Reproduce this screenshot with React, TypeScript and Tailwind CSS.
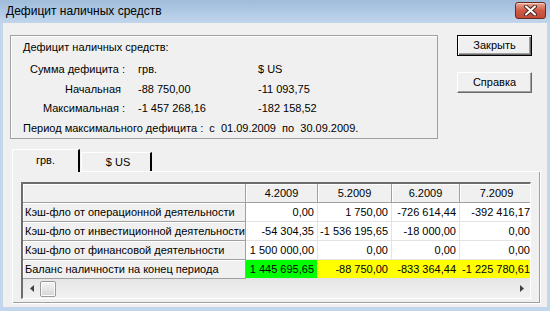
import React from 'react';

interface GridRow {
  label: string;
  values: string[];
  colors?: string[];
}

const months = ['4.2009', '5.2009', '6.2009', '7.2009'];
const colWidths = ['w-[72px]', 'w-[74px]', 'w-[68px]', 'w-[74px]'];

const rows: GridRow[] = [
  { label: 'Кэш-фло от операционной деятельности', values: ['0,00', '1 750,00', '-726 614,44', '-392 416,17'] },
  { label: 'Кэш-фло от инвестиционной деятельности', values: ['-54 304,35', '-1 536 195,65', '-18 000,00', '0,00'] },
  { label: 'Кэш-фло от финансовой деятельности', values: ['1 500 000,00', '0,00', '0,00', '0,00'] },
  {
    label: 'Баланс наличности на конец периода',
    values: ['1 445 695,65', '-88 750,00', '-833 364,44', '-1 225 780,61'],
    colors: ['bg-[#00ff00]', 'bg-[#ffff00]', 'bg-[#ffff00]', 'bg-[#ffff00]'],
  },
];

const fixedCell =
  'bg-[#f0f0f0] border-r border-b border-[#a0a0a0] shadow-[inset_1px_1px_0_#ffffff]';

const App: React.FC = () => {
  return (
    <div className="w-[550px] h-[311px] overflow-hidden bg-[#c2d7ed] flex flex-col font-['Liberation_Sans',Arial,sans-serif] text-black">
      {/* Title bar */}
      <div className="h-[23px] shrink-0 flex items-center justify-between pl-[6px] pr-[4px] bg-linear-to-b from-[#9fbcdb] to-[#c1d6ec]">
        <span className="text-[12px] leading-none pb-[1px]">
          Дефицит наличных средств
        </span>
        <div className="w-[31px] h-[17px] mb-[2px] rounded-[3px] border border-[#6b2a20] bg-linear-to-b from-[#e9a898] via-[#cf5a45] to-[#c04a36] flex items-center justify-center shadow-[inset_0_1px_0_#f6cfc4]">
          <svg width="13" height="11" viewBox="0 0 13 11">
            <path d="M2 1.5 L11 9.5 M11 1.5 L2 9.5" stroke="#4a2a26" strokeWidth="4" strokeLinecap="round" />
            <path d="M2 1.5 L11 9.5 M11 1.5 L2 9.5" stroke="#ffffff" strokeWidth="2" strokeLinecap="round" />
          </svg>
        </div>
      </div>

      {/* Body */}
      <div className="flex-1 ml-[3px] mr-[3px] mb-[4px] bg-[#f0f0f0] text-[11px] flex flex-col">
        <div className="flex pt-[12px] pl-[7px]">
          {/* Summary group */}
          <div className="w-[428px] h-[104px] border border-[#a0a0a0] shadow-[inset_1px_1px_0_#ffffff] pl-[12px] flex flex-col">
            <div className="h-[20px] mt-[1px] flex items-center">Дефицит наличных средств:</div>
            <div className="h-[20px] mt-[2px] flex items-center">
              <span className="w-[102px] text-right">Сумма дефицита :</span>
              <span className="w-[120px] pl-[13px]">грв.</span>
              <span className="pl-[13px]">$ US</span>
            </div>
            <div className="h-[20px] flex items-center">
              <span className="w-[98px] text-right">Начальная</span>
              <span className="w-[124px] pl-[17px]">-88 750,00</span>
              <span className="pl-[13px]">-11 093,75</span>
            </div>
            <div className="h-[19px] flex items-center">
              <span className="w-[102px] text-right">Максимальная :</span>
              <span className="w-[120px] pl-[13px]">-1 457 268,16</span>
              <span className="pl-[13px]">-182 158,52</span>
            </div>
            <div className="h-[20px] flex items-center whitespace-pre">
              Период максимального дефицита :  с  01.09.2009  по  30.09.2009.
            </div>
          </div>

          {/* Buttons */}
          <div className="ml-[19px] flex flex-col">
            <button className="w-[75px] h-[21px] border border-black bg-[#f0f0f0] shadow-[inset_1px_1px_0_#ffffff,inset_-1px_-1px_0_#696969,inset_-2px_-2px_0_#a0a0a0] flex items-center justify-center">
              Закрыть
            </button>
            <button className="mt-[16px] w-[75px] h-[21px] bg-[#f0f0f0] border-t border-l border-white border-r border-b border-r-[#696969] border-b-[#696969] shadow-[inset_-1px_-1px_0_#a0a0a0] flex items-center justify-center">
              Справка
            </button>
          </div>
        </div>

        {/* Tabs */}
        <div className="pl-[9px] pr-[6px] mt-[10px] flex flex-col">
          <div className="flex items-end h-[22px]">
            <div className="relative z-10 w-[68px] h-[23px] -mb-[1px] bg-[#f0f0f0] border-t border-l border-white border-r-2 border-r-black flex items-center justify-center pb-[2px]">
              грв.
            </div>
            <div className="ml-[1px] w-[71px] h-[19px] bg-[#f0f0f0] border-t border-l border-white border-r-2 border-r-black flex items-center justify-center pl-[4px]">
              $ US
            </div>
          </div>

          <div className="h-[133px] border-t border-l border-white border-r border-b border-black shadow-[inset_-1px_-1px_0_#a0a0a0] pt-[10px] pl-[8px] pr-[9px]">
            {/* String grid */}
            <div className="w-[510px] h-[117px] border-t-2 border-l-2 border-t-[#6d6d6d] border-l-[#6d6d6d] border-r border-b border-r-white border-b-white overflow-hidden bg-white">
              <div className="flex h-[19px]">
                <div className={`w-[223px] shrink-0 ${fixedCell}`} />
                {months.map((m, i) => (
                  <div
                    key={m}
                    className={`${colWidths[i]} shrink-0 flex items-center justify-center ${fixedCell}`}
                  >
                    {m}
                  </div>
                ))}
              </div>
              {rows.map((row) => (
                <div key={row.label} className="flex h-[19px]">
                  <div className={`w-[223px] shrink-0 flex items-center pl-[2px] whitespace-nowrap ${fixedCell}`}>
                    {row.label}
                  </div>
                  {row.values.map((v, i) => (
                    <div
                      key={i}
                      className={`${colWidths[i]} shrink-0 flex items-center justify-end pr-[3px] whitespace-nowrap border-r border-b border-[#e3e3e3] ${
                        row.colors ? row.colors[i] : 'bg-white'
                      }`}
                    >
                      {v}
                    </div>
                  ))}
                </div>
              ))}

              {/* Horizontal scrollbar */}
              <div className="h-[19px] w-[507px] bg-linear-to-b from-[#e6e6e6] to-[#f2f2f2] flex items-center">
                <div className="w-[17px] h-full flex items-center justify-center">
                  <svg width="4" height="7" viewBox="0 0 4 7">
                    <path d="M4 0 L0 3.5 L4 7 Z" fill="#404040" />
                  </svg>
                </div>
                <div className="w-[16px] h-[16px] rounded-[2px] border border-[#9a9a9a] bg-linear-to-b from-[#f6f6f6] to-[#d6d6d6] shadow-[inset_0_0_0_1px_#fdfdfd]" />
                <div className="flex-1" />
                <div className="w-[17px] h-full flex items-center justify-center">
                  <svg width="4" height="7" viewBox="0 0 4 7">
                    <path d="M0 0 L4 3.5 L0 7 Z" fill="#404040" />
                  </svg>
                </div>
              </div>
            </div>
          </div>
        </div>
      </div>
    </div>
  );
};

export default App;
